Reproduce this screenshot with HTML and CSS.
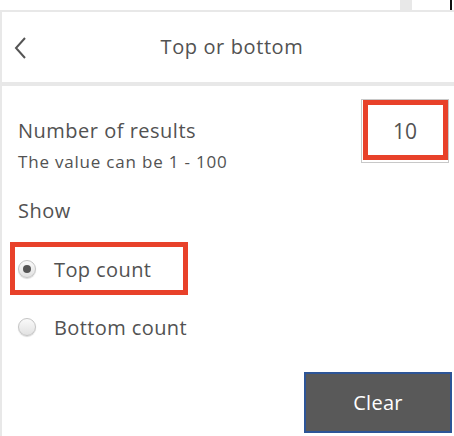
FILE: index.html
```html
<!DOCTYPE html>
<html>
<head>
<meta charset="utf-8">
<link rel="stylesheet" href="styles.css">
</head>
<body>
<div class="topstrip">
  <div class="strip-gap"></div>
  <div class="strip-block"></div>
  <div class="strip-space"></div>
  <div class="strip-line"></div>
</div>
<div class="panel">
  <div class="header">
    <svg class="back" width="14" height="24" viewBox="0 0 14 24"><path d="M11 2 L2 12 L11 22" fill="none" stroke="#555" stroke-width="2"/></svg>
    <div class="title">Top or bottom</div>
  </div>
  <div class="content">
    <div class="row-number">
      <div class="number-text">
        <div class="label">Number of results</div>
        <div class="hint">The value can be 1 - 100</div>
      </div>
      <div class="input-box">10<span class="mark mark-input"></span></div>
    </div>
    <div class="show">Show</div>
    <div class="radio-row">
      <span class="radio checked"></span><span class="radio-label">Top count</span>
      <span class="mark mark-radio"></span>
    </div>
    <div class="radio-row second">
      <span class="radio"></span><span class="radio-label">Bottom count</span>
    </div>
    <div class="actions">
      <button class="clear">Clear</button>
    </div>
  </div>
</div>
</body>
</html>
```
FILE: styles.css
```css
* { box-sizing: border-box; }
html, body { margin: 0; padding: 0; background: #fff; }
body {
  font-family: "Open Sans", "Noto Sans", sans-serif;
  color: #525252;
  width: 454px;
  height: 436px;
  overflow: hidden;
}
.topstrip { display: flex; height: 10px; }
.strip-gap { width: 400px; }
.strip-block { width: 12px; background: #e8e8e8; }
.strip-space { width: 38px; }
.strip-line { width: 2px; background: #111; }
.panel {
  border-top: 2px solid #e8e8e8;
  border-left: 2px solid #e8e8e8;
  height: 426px;
  display: flex;
  flex-direction: column;
}
.header {
  position: relative;
  height: 74px;
  border-bottom: 4px solid #e8e8e8;
  display: flex;
  align-items: center;
  justify-content: center;
}
.back { position: absolute; left: 12px; top: 24px; }
.title { font-size: 20px; letter-spacing: 0.6px; margin-left: 8px; margin-top: -2px; }
.content {
  flex: 1;
  padding: 13px 5px 3px 16px;
  display: flex;
  flex-direction: column;
}
.row-number { display: flex; justify-content: space-between; align-items: flex-start; }
.number-text { padding-top: 18px; }
.label { font-size: 20px; line-height: 28px; letter-spacing: 0.5px; }
.hint { font-size: 17px; line-height: 22px; letter-spacing: 0.8px; margin-top: 6px; }
.input-box {
  position: relative;
  width: 88px;
  height: 64px;
  border: 1px solid #c8c8c8;
  display: flex;
  align-items: center;
  justify-content: center;
  font-size: 21px;
}
.mark { position: absolute; border: 5px solid #e8412a; }
.mark-input { left: 1px; top: 0; right: 0; bottom: 2px; }
.show { font-size: 20px; line-height: 28px; letter-spacing: 0.5px; margin-top: 24px; }
.radio-row {
  position: relative;
  display: flex;
  align-items: center;
  height: 28px;
  margin-top: 30px;
  font-size: 20px;
  letter-spacing: 0.4px;
}
.radio-row.second { margin-top: 30px; }
.radio {
  width: 18px;
  height: 18px;
  border-radius: 50%;
  border: 1px solid #c4c4c4;
  background: linear-gradient(#fafafa, #e2e2e2);
  box-shadow: 0 1px 1px rgba(0,0,0,0.15);
  margin-right: 18px;
  position: relative;
}
.radio.checked::after {
  content: "";
  position: absolute;
  left: 4px; top: 4px;
  width: 8px; height: 8px;
  border-radius: 50%;
  background: #555;
}
.mark-radio { left: -8px; top: -13px; width: 178px; height: 53px; }
.actions { margin-top: auto; display: flex; justify-content: flex-end; }
.clear {
  width: 148px;
  height: 61px;
  background: #595959;
  border: 2px solid #2d5597;
  color: #fff;
  font-family: "Open Sans", "Noto Sans", sans-serif;
  font-size: 20px;
  letter-spacing: 0.3px;
  margin-right: -3px;
}
```
